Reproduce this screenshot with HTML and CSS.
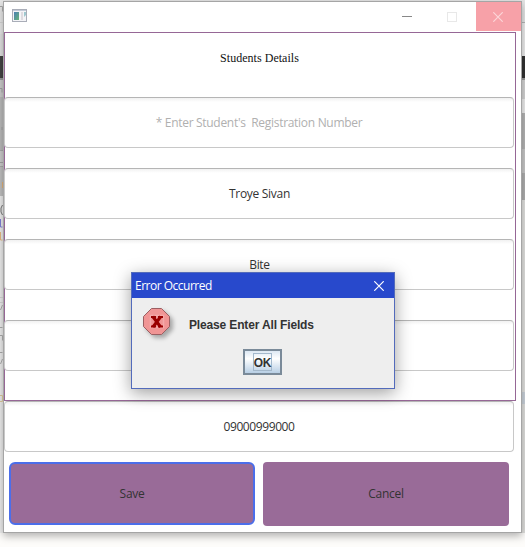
FILE: index.html
```html
<!DOCTYPE html>
<html lang="en">
<head>
<meta charset="utf-8">
<title>Students Details</title>
<link rel="stylesheet" href="styles.css">
</head>
<body>
<svg class="backdrop" width="3" height="533" aria-hidden="true">
  <path d="M0 6.5h2.5v5M0 88.5h2v4M2 127v3M0 162.5h3M2.5 305l-2 5M0 327.5h2.5M0 335.5h2.5v5M0 352.5h2.5M2.5 359l-2 5" fill="none" stroke="#888"/>
  <path d="M2.5 205l-1.5 3v4l1.5 3" fill="none" stroke="#444"/>
  <path d="M.5 219v8h2" fill="none" stroke="#5555c0"/>
  <path d="M.5 232v8h2M2.5 182v6" fill="none" stroke="#d29a55"/>
  <path d="M0 22.5h3M0 297.5h3M0 302.5h3" stroke="#bbb"/>
  <path d="M0 395.5h2.5v6H0" fill="none" stroke="#c3ad75"/>
</svg>
<main class="window">
  <header class="titlebar">
    <svg class="app-icon" width="16" height="14" viewBox="0 0 16 14">
      <defs><linearGradient id="g" x1="0" y1="0" x2="1" y2="1"><stop offset="0" stop-color="#4a7fb5"/><stop offset="1" stop-color="#67b478"/></linearGradient></defs>
      <rect x=".5" y=".5" width="14" height="12" fill="#f4f4f7" stroke="#a9adb8"/>
      <path d="M1 1.5h13" stroke="#c3cad8"/>
      <rect x="2" y="3" width="5" height="8" fill="url(#g)"/>
      <rect x="9" y="3" width="2" height="8" fill="#dedbe0"/>
      <path d="M12 3h2v3l-2 2z" fill="#9fc8cf"/>
    </svg>
    <div class="controls">
      <span class="control"><svg width="10" height="10"><path d="M0 4.5h10" stroke="#888"/></svg></span>
      <span class="control"><svg width="10" height="10"><rect x=".5" y=".5" width="9" height="9" fill="none" stroke="#e8e8e8"/></svg></span>
      <span class="control close"><svg width="10" height="10"><path d="M.3.3l9.4 9.4M9.7.3L.3 9.7" stroke="#fcd5d8" stroke-width="1.2"/></svg></span>
    </div>
  </header>
  <section class="pane">
    <h1 class="heading">Students Details</h1>
    <div class="field placeholder">* Enter Student's&nbsp; Registration Number</div>
    <div class="field">Troye Sivan</div>
    <div class="field">Bite</div>
    <div class="field wide-gap"></div>
  </section>
  <div class="field phone">09000999000</div>
  <footer class="actions">
    <button class="button focused">Save</button>
    <button class="button">Cancel</button>
  </footer>
</main>
<div class="dialog">
  <div class="dialog-title"><span class="dialog-name">Error Occurred</span>
    <svg width="10" height="10"><path d="M.3.3l9.4 9.4M9.7.3L.3 9.7" stroke="#fff" stroke-width="1.2"/></svg>
  </div>
  <div class="dialog-message">
    <svg class="error-icon" width="32" height="32" viewBox="0 0 32 32">
      <path d="M8.5.5h10l8 8v10l-8 8h-10l-8-8v-10z" fill="#f09595" stroke="#9b5f62"/>
      <g fill="none" stroke="#f8c4c4" stroke-width="1.5"><path d="M7.5 7.5h13v12h-13z" opacity=".45"/></g>
      <path d="M9.8 8.5l7.8 10.5M17.8 8.5L10 19" stroke="#900" stroke-width="3"/>
      <path d="M8 9h5M15 9h5M8 18.500h5M15 18.500h5" stroke="#900" stroke-width="2"/>
    </svg>
    <span class="message">Please Enter All Fields</span>
  </div>
  <button class="ok"><span>OK</span></button>
</div>
</body>
</html>
```
FILE: styles.css
```css
* { box-sizing: border-box; }
body {
  margin: 0;
  width: 525px;
  height: 547px;
  padding: 1px 3px;
  overflow: hidden;
  font: 12px/16px "Open Sans", "Noto Sans", sans-serif;
  color: #333;
  background:
    linear-gradient(#fdfcfa, #fdfcfa) 0 533px / 525px 14px no-repeat,
    linear-gradient(#e8e8e8 0 34px, #e2e2e2 34px 56px, #444 56px 78px, #999 78px 80px, #ccc 80px 97px, #bbb 97px 150px, #aaa 150px 151px, #ccc 151px 166px, #aaa 166px 167px, #c0c0c0 167px 196px, #eee 196px) 0 0 / 3px 533px no-repeat,
    linear-gradient(#e6e6e6 0 22px, #b5b5b5 22px 23px, #eee 23px 56px, #333 56px 78px, #999 78px 80px, #d5d5d5 80px 99px, #eee 99px 113px, #b5b5b5 113px 149px, #c8c8c8 149px 173px, #b0b0b0 173px 200px, #e2e2e0 200px 392px, #cbd3dc 392px 404px, #e0e0de 404px);
}
.backdrop { position: absolute; left: 0; top: 0; opacity: .75; }
.window {
  width: 519px;
  height: 532px;
  background: #fff;
  border: 1px solid #a5a5a5;
  box-shadow: 0 3px 8px rgba(0, 0, 0, .3);
}
.titlebar { display: flex; justify-content: space-between; height: 30px; padding-left: 8px; }
.app-icon { margin-top: 7px; }
.controls { display: flex; height: 29px; }
.control { width: 45px; display: flex; align-items: center; justify-content: center; padding-right: 3px; }
.control.close { background: #f7a1a8; padding-right: 2px; }
.control svg, .dialog-title svg { display: block; }
.pane { width: 512px; height: 369px; border: 1px solid #966796; }
.heading { height: 64px; margin: 0; padding: 17px 1px 0 0; font: 12px/16px "Liberation Serif", serif; letter-spacing: .03px; text-align: center; color: #111; }
.field {
  width: 510px;
  height: 51px;
  margin: 0 0 20px -1px;
  padding-left: 1px;
  display: flex;
  align-items: center;
  justify-content: center;
  background: linear-gradient(#f1f1f1, #fff 4px);
  border: 1px solid #c8c8c8;
  border-top-color: #b5b5b5;
  border-radius: 4px;
  letter-spacing: -.3px;
}
.field.placeholder { padding-left: 0; color: #b0b0b0; }
.field.wide-gap { margin-top: 30px; }
.field.phone { margin: 0; padding: 0; letter-spacing: -.4px; }
.actions { display: flex; gap: 8px; padding: 10px 0 0 5px; }
.button {
  width: 246px;
  height: 64px;
  padding: 0;
  border: 0;
  border-radius: 4px;
  background: #996b98;
  font: inherit;
  letter-spacing: -.3px;
  color: #333;
}
.button.focused { height: 63px; border: 2px solid #4b6eea; border-radius: 6px; }
.dialog {
  position: absolute;
  left: 131px;
  top: 272px;
  width: 264px;
  height: 117px;
  background: #eee;
  border: 1px solid #536bbb;
  box-shadow: 0 4px 16px rgba(0, 0, 0, .38);
}
.dialog-title {
  height: 25px;
  padding: 0 10px 0 3px;
  display: flex;
  justify-content: space-between;
  align-items: center;
  background: #2849cc;
  color: #fff;
}
.dialog-name { letter-spacing: -.5px; }
.dialog-message {
  display: flex;
  gap: 14px;
  height: 51px;
  padding: 10px 0 0 11px;
  font: bold 12px/16px "Liberation Sans", sans-serif;
  letter-spacing: -.15px;
}
.error-icon { filter: drop-shadow(3px 3px 2px rgba(0, 0, 0, .3)); }
.message { margin-top: 9px; }
.ok {
  display: flex;
  align-items: center;
  justify-content: center;
  width: 39px;
  height: 26px;
  margin-left: 111px;
  padding: 0;
  border: 2px solid #7a8a99;
  background: linear-gradient(#dde8f3, #fff 35%, #b8cfe5);
  font: bold 12px/16px "Liberation Sans", sans-serif;
  letter-spacing: -.3px;
  color: #333;
}
.ok span { width: 19px; height: 18px; padding-top: 2px; border: 1px solid #a3b8cc; display: flex; align-items: center; justify-content: center; }
```
